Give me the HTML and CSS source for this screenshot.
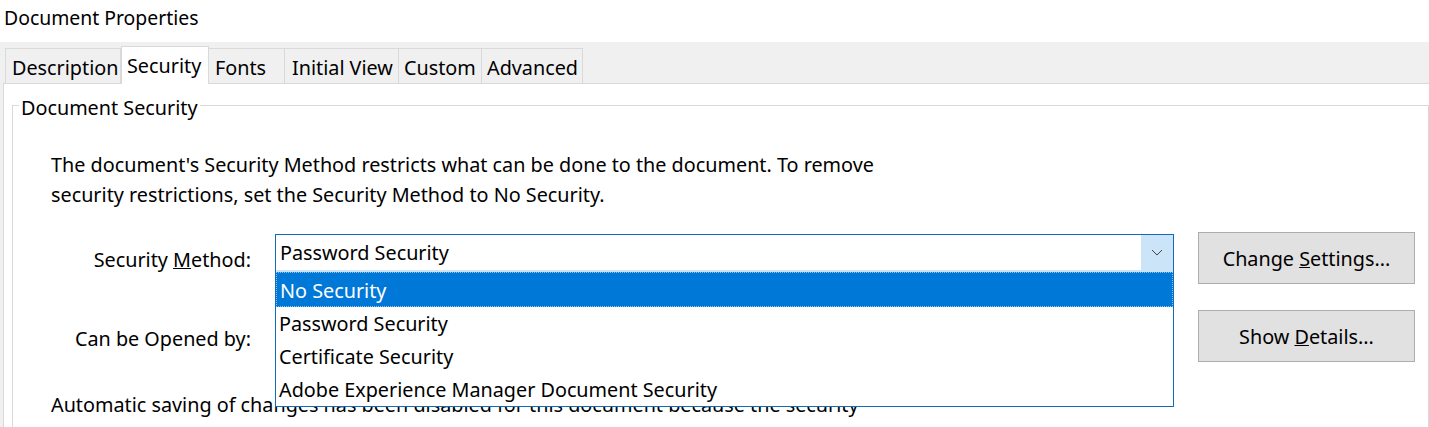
FILE: index.html
```html
<!DOCTYPE html>
<html>
<head>
<meta charset="utf-8">
<link rel="stylesheet" href="styles.css">
</head>
<body>
<div class="title">Document Properties</div>
<div class="dialog">
  <div class="tabs">
    <div class="tab t-desc">Description</div>
    <div class="tab t-sec active">Security</div>
    <div class="tab t-fonts">Fonts</div>
    <div class="tab t-init">Initial View</div>
    <div class="tab t-custom">Custom</div>
    <div class="tab t-adv">Advanced</div>
  </div>
  <div class="panel">
    <fieldset class="group">
      <legend class="legend">Document Security</legend>
      <p class="intro">The document's Security Method restricts what can be done to the document. To remove<br>security restrictions, set the Security Method to No Security.</p>
      <div class="form">
        <div class="label l1">Security <u>M</u>ethod:</div>
        <div class="combo">
          <div class="combo-field">
            <span class="combo-value">Password Security</span>
            <span class="combo-arrow"><svg width="12" height="7" viewBox="0 0 12 7"><path d="M1 1 L6 6 L11 1" fill="none" stroke="#444" stroke-width="1"/></svg></span>
          </div>
          <ul class="combo-list">
            <li class="opt selected">No Security</li>
            <li class="opt">Password Security</li>
            <li class="opt">Certificate Security</li>
            <li class="opt">Adobe Experience Manager Document Security</li>
          </ul>
        </div>
        <button class="btn b1">Change <u>S</u>ettings...</button>
        <div class="label l2">Can be Opened by:</div>
        <div class="blank"></div>
        <button class="btn b2">Show <u>D</u>etails...</button>
      </div>
      <p class="note">Automatic saving of changes has been disabled for this document because the security<br>methods and restrictions cannot be modified. You can save the document and continue editing normally.</p>
    </fieldset>
  </div>
</div>
</body>
</html>
```

FILE: styles.css
```css
html, body {
  margin: 0;
  padding: 0;
  background: #ffffff;
  overflow: hidden;
}
body {
  font-family: "Noto Sans", "Open Sans", sans-serif;
  font-size: 19.8px;
  color: #000;
  width: 1429px;
  height: 427px;
}
.title {
  height: 42px;
  line-height: 36px;
  padding-left: 4px;
  font-size: 19.4px;
}
.dialog {
  background: #f0f0f0;
  padding-left: 3px;
  height: 385px;
}
.tabs {
  display: flex;
  align-items: flex-end;
  height: 42px;
  padding-left: 2px;
  position: relative;
  z-index: 2;
}
.tab {
  box-sizing: border-box;
  height: 35px;
  line-height: 34px;
  padding-top: 2px;
  border: 1px solid #d9d9d9;
  border-bottom: none;
  background: #f0f0f0;
  padding-left: 6px;
  margin-bottom: 1px;
}
.tab + .tab { border-left: none; }
.tab.active {
  height: 38px;
  background: #fff;
  border-left: 1px solid #d9d9d9;
  margin-bottom: 0;
  line-height: 34px;
  padding-top: 2px;
  padding-left: 5px;
}
.tab.active + .tab { border-left: none; }
.t-desc { width: 116px; }
.t-sec { width: 88px; }
.t-fonts { width: 76px; }
.t-init { width: 114px; padding-left: 7px; }
.t-custom { width: 83px; padding-left: 5px; }
.t-adv { width: 101px; padding-left: 5px; }
.panel {
  background: #fff;
  border-top: 1px solid #d9d9d9;
  border-left: 1px solid #d9d9d9;
  margin-top: -1px;
  height: 345px;
  padding-left: 8px;
  overflow: hidden;
}
.group {
  margin: 7px 0 0 0;
  border: 1px solid #d9d9d9;
  padding: 0 0 0 38px;
  min-width: 0;
  height: 400px;
}
.legend {
  margin-left: -32px;
  padding: 5px 2px 0 2px;
  line-height: 24px;
}
.intro {
  margin: 30px 0 0 0;
  line-height: 30px;
}
.form {
  display: grid;
  grid-template-columns: 200px 899px 217px;
  grid-template-rows: 52px 52px;
  column-gap: 24px;
  row-gap: 26px;
  margin: 22px 0 0 0;
  align-items: center;
}
.label {
  text-align: right;
}
.l1 { padding-top: 2px; }
.l2 { padding-top: 4px; }
.combo {
  position: relative;
  align-self: start;
  margin-top: 2px;
  z-index: 3;
}
.combo-field {
  box-sizing: border-box;
  height: 38px;
  border: 1px solid #0f6cbd;
  border-bottom: none;
  background: #cce4f7;
  display: flex;
}
.combo-value {
  flex: 1;
  background: #fff;
  height: 35px;
  line-height: 36px;
  padding-left: 4px;
}
.combo-arrow {
  width: 32px;
  display: flex;
  align-items: center;
  justify-content: center;
  height: 35px;
}
.combo-list {
  position: absolute;
  left: 0;
  right: 0;
  top: 38px;
  margin: 0;
  padding: 0;
  list-style: none;
  background: #fff;
  border: 1px solid #0f6cbd;
  border-top: none;
}
.opt {
  box-sizing: border-box;
  height: 33px;
  line-height: 34px;
  padding-left: 3px;
}
.opt.selected {
  height: 35px;
  line-height: 35px;
  background: #0078d7;
  color: #fff;
  border: 1px dotted #8fc1ea;
}
.btn {
  box-sizing: border-box;
  width: 217px;
  height: 52px;
  background: #e1e1e1;
  border: 1px solid #adadad;
  font: inherit;
  color: #000;
  padding: 0;
}
.blank { height: 52px; }
.note {
  margin: 28px 0 0 0;
  line-height: 30px;
  position: relative;
  z-index: 1;
}
```
